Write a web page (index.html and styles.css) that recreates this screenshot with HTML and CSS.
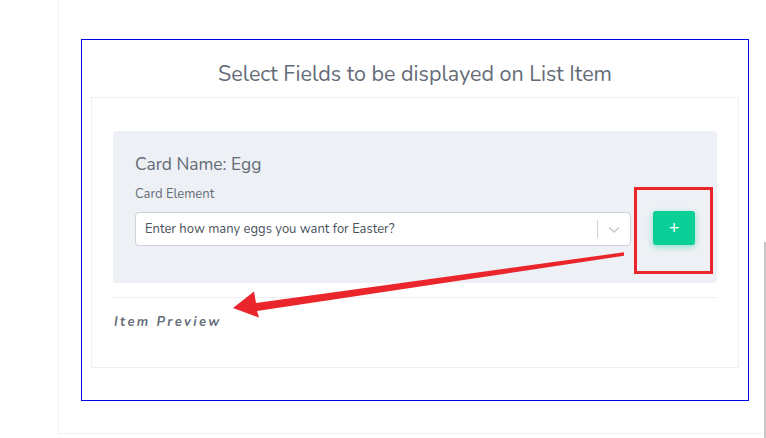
FILE: index.html
```html
<!DOCTYPE html>
<html>
<head>
<meta charset="utf-8">
<link rel="stylesheet" href="styles.css">
</head>
<body>
<div class="frame">
  <div class="box">
    <h2 class="title">Select Fields to be displayed on List Item</h2>
    <div class="panel">
      <div class="card">
        <div class="card-name">Card Name: Egg</div>
        <div class="label">Card Element</div>
        <div class="row">
          <div class="select">
            <span class="select-value">Enter how many eggs you want for Easter?</span>
            <span class="sep"></span>
            <svg class="chev" width="12" height="8" viewBox="0 0 12 8"><path d="M1 1.5 L6 6 L11 1.5" fill="none" stroke="#c4c7cc" stroke-width="1.4"/></svg>
          </div>
          <button class="add">+</button>
        </div>
        <div class="highlight"></div>
      </div>
      <div class="divider"></div>
      <div class="preview">Item Preview</div>
    </div>
  </div>
</div>
<div class="scrollbar"></div>
<svg class="arrow" width="766" height="438" viewBox="0 0 766 438">
  <polygon points="624,252.3 624,255.8 257,311 259,317.5 233,308 254,291.5 256,303" fill="#ea262c"/>
</svg>
</body>
</html>
```
FILE: styles.css
```css
* { box-sizing: border-box; }
html, body { margin: 0; padding: 0; }
body {
  width: 766px;
  height: 438px;
  background: #fff;
  display: flex;
  align-items: flex-start;
  font-family: "Nunito", "Lato", "Noto Sans", sans-serif;
  position: relative;
  overflow: hidden;
}
.frame {
  margin-left: 58px;
  width: 706px;
  height: 434px;
  border-left: 1px solid #eef0f7;
  border-bottom: 1px solid #eef0f7;
  padding: 39px 0 0 22px;
}
.scrollbar {
  width: 2px;
  height: 196px;
  margin-top: 242px;
  background: #c6c6c6;
}
.box {
  width: 668px;
  height: 362px;
  border: 1px solid #0000e6;
  padding: 0 9px;
}
.title {
  margin: 0;
  padding-top: 21px;
  height: 57px;
  line-height: 27px;
  text-align: center;
  font-size: 21.5px;
  font-weight: 400;
  color: #646c78;
}
.panel {
  border: 1px solid #eef0f2;
  height: 271px;
  padding: 33px 21px 0 21px;
}
.card {
  position: relative;
  background: #edf0f4;
  border-radius: 4px;
  height: 152px;
  padding: 21px 22px 0;
}
.card-name {
  font-size: 17.4px;
  line-height: 24px;
  color: #646c78;
}
.label {
  margin-top: 9px;
  font-size: 13px;
  line-height: 18px;
  color: #646c78;
}
.row {
  display: flex;
  align-items: flex-start;
  gap: 22px;
  margin-top: 8px;
}
.select {
  margin-top: 1px;
  width: 497px;
  height: 34px;
  background: #fff;
  border: 1px solid #cfd1d4;
  border-radius: 4px;
  display: flex;
  align-items: center;
  padding-left: 9px;
}
.select-value {
  flex: 1;
  font-size: 13px;
  color: #4a525d;
}
.sep {
  width: 1px;
  height: 18px;
  background: #cfd1d4;
}
.chev {
  margin: 1px 10px 0 10px;
}
.add {
  width: 42px;
  height: 34px;
  border: 0;
  border-radius: 3px;
  background: #0acf97;
  color: #fff;
  font-size: 18px;
  line-height: 20px;
  font-family: "Liberation Sans", sans-serif;
  padding: 0;
  box-shadow: 0 2px 6px rgba(10, 207, 151, 0.45);
}
.highlight {
  position: absolute;
  left: 521px;
  top: 56px;
  width: 79px;
  height: 87px;
  border: 3px solid #ea262c;
}
.divider {
  margin-top: 14px;
  height: 1px;
  background: #eceef1;
}
.preview {
  margin-top: 14px;
  padding-left: 1px;
  font-size: 13px;
  line-height: 20px;
  font-style: italic;
  font-weight: 700;
  letter-spacing: 2.4px;
  color: #646c78;
}
.arrow {
  position: absolute;
  left: 0;
  top: 0;
  pointer-events: none;
}
```
